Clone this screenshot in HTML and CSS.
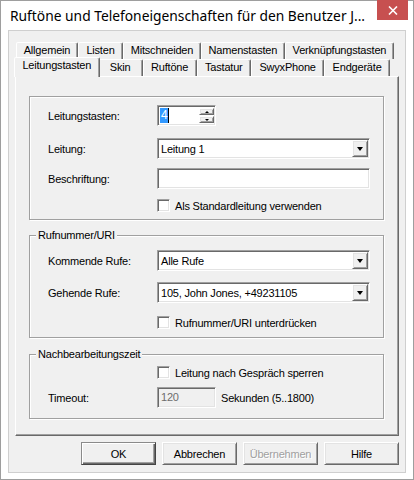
FILE: index.html
```html
<!DOCTYPE html>
<html>
  <head>
    <meta charset="utf-8">
    <title>Ruftöne und Telefoneigenschaften</title>
    <link rel="stylesheet" href="styles.css">
  </head>
  <body>
    <div class="window">
      <div class="titlebar">
        <span class="title">Ruftöne und Telefoneigenschaften für den Benutzer J...</span>
        <span class="close">
          <svg width="10" height="9" viewBox="0 0 10 9"><path d="M1 0.5 L9 8.5 M9 0.5 L1 8.5" stroke="#fff" stroke-width="1.6" fill="none"/></svg>
        </span>
      </div>

      <div class="client">
        <div class="tabs">
          <div class="tabrow back">
            <span class="tab">Allgemein</span>
            <span class="tab">Listen</span>
            <span class="tab">Mitschneiden</span>
            <span class="tab">Namenstasten</span>
            <span class="tab">Verknüpfungstasten</span>
          </div>
          <div class="tabrow front">
            <span class="tab active">Leitungstasten</span>
            <span class="tab">Skin</span>
            <span class="tab">Ruftöne</span>
            <span class="tab">Tastatur</span>
            <span class="tab">SwyxPhone</span>
            <span class="tab">Endgeräte</span>
          </div>
        </div>

        <div class="panel">
          <!-- line key settings -->
          <fieldset class="group keys">
            <div class="row">
              <span class="lbl">Leitungstasten:</span>
              <div class="spin sunken">
                <span class="val"><span class="sel">4</span><span class="caret"></span></span>
                <span class="spinbtns">
                  <span class="spinbtn raised"><i class="arr-up"></i></span>
                  <span class="spinbtn raised"><i class="arr-down"></i></span>
                </span>
              </div>
            </div>
            <div class="row mt12">
              <span class="lbl">Leitung:</span>
              <div class="combo sunken">
                <span class="text">Leitung 1</span>
                <span class="drop raised"><i class="arr-drop"></i></span>
              </div>
            </div>
            <div class="row mt9">
              <span class="lbl">Beschriftung:</span>
              <div class="edit sunken"></div>
            </div>
            <div class="check mt10">
              <span class="box sunken"></span>
              <span>Als Standardleitung verwenden</span>
            </div>
          </fieldset>

          <fieldset class="group calls">
            <legend>Rufnummer/URI</legend>
            <div class="row">
              <span class="lbl">Kommende Rufe:</span>
              <div class="combo sunken">
                <span class="text">Alle Rufe</span>
                <span class="drop raised"><i class="arr-drop"></i></span>
              </div>
            </div>
            <div class="row mt11">
              <span class="lbl">Gehende Rufe:</span>
              <div class="combo sunken">
                <span class="text">105, John Jones, +49231105</span>
                <span class="drop raised"><i class="arr-drop"></i></span>
              </div>
            </div>
            <div class="check mt13">
              <span class="box sunken"></span>
              <span>Rufnummer/URI unterdrücken</span>
            </div>
          </fieldset>

          <fieldset class="group wrapup">
            <legend>Nachbearbeitungszeit</legend>
            <div class="check">
              <span class="box sunken"></span>
              <span>Leitung nach Gespräch sperren</span>
            </div>
            <div class="row mt8">
              <span class="lbl">Timeout:</span>
              <div class="edit short disabled sunken">120</div>
              <span class="unit">Sekunden (5..1800)</span>
            </div>
          </fieldset>
        </div>

        <div class="buttons">
          <span class="btn default raised">OK</span>
          <span class="btn raised">Abbrechen</span>
          <span class="btn off raised">Übernehmen</span>
          <span class="btn raised">Hilfe</span>
        </div>
      </div>
    </div>
  </body>
</html>
```

FILE: styles.css
```css
* { box-sizing: border-box; }

body {
    margin: 0;
    font-family: "Liberation Sans", Arial, sans-serif;
    font-size: 11px;
    letter-spacing: -0.2px;
    color: #000;
}

/* window frame */
.window {
    width: 414px;
    height: 480px;
    border: 1px solid #9e9e9e;
    background: #fff;
    display: flex;
    flex-direction: column;
}

.titlebar {
    height: 29px;
    display: flex;
    align-items: center;
    padding-left: 9px;
}

.title {
    flex: 1;
    font-family: "Noto Sans", sans-serif;
    font-size: 13.8px;
    letter-spacing: 0;
    white-space: nowrap;
}

.close {
    align-self: flex-start;
    margin: -1px 5px 0 0;
    width: 31px;
    height: 20px;
    background: #c75050;
    display: flex;
    align-items: center;
    justify-content: center;
}

.client {
    margin: 0 7px;
    height: 443px;
    border: 1px solid #cfcfcf;
    background: #f0f0f0;
    padding: 11px 6px 0;
    display: flex;
    flex-direction: column;
}

/* 3d edges */
.sunken {
    border: 1px solid;
    border-color: #a0a0a0 #fff #fff #a0a0a0;
    box-shadow: inset 1px 1px 0 #696969, inset -1px -1px 0 #e3e3e3;
}

.raised {
    border: 1px solid;
    border-color: #fff #696969 #696969 #fff;
    box-shadow: inset 1px 1px 0 #e3e3e3, inset -1px -1px 0 #a0a0a0;
    background: #f0f0f0;
}

/* tab strip, two rows */
.tabs {
    display: flex;
    flex-direction: column;
}

.tabrow {
    display: flex;
    height: 17px;
}

.tabrow.back { margin: 0 5px 0 1px; }
.tabrow.front { margin: 0 9px 0 1px; }

.tab {
    flex: 1 1 auto;
    min-width: 45px;
    height: 17px;
    padding: 0 6px;
    line-height: 15px;
    text-align: center;
    white-space: nowrap;
    background: #f0f0f0;
    border: 1px solid;
    border-bottom: 0;
    border-color: #fff #696969 transparent #fff;
    border-radius: 2px 2px 0 0;
    box-shadow: inset -1px 0 0 #a0a0a0;
}

.tab.active {
    position: relative;
    z-index: 1;
    height: 20px;
    margin: -2px -2px -1px;
}

.panel {
    height: 360px;
    border: 1px solid;
    border-color: #fff #696969 #696969 #fff;
    box-shadow: inset -1px -1px 0 #a0a0a0;
    padding: 19px 14px 0 13px;
}

/* group boxes */
.group {
    margin: 0;
    border: 1px solid #a0a0a0;
    box-shadow: 1px 1px 0 #fff, inset 1px 1px 0 #fff;
    padding: 8px 13px 7px 18px;
}

.group legend {
    padding: 0 2px;
    margin-left: -12px;
    line-height: 13px;
    background: #f0f0f0;
}

.group.calls { margin-top: 9px; padding-bottom: 8px; }
.group.wrapup { margin-top: 10px; padding-top: 5px; padding-bottom: 10px; }

.row {
    display: flex;
    align-items: center;
}

.mt8 { margin-top: 8px; }
.mt9 { margin-top: 9px; }
.mt10 { margin-top: 10px; }
.mt11 { margin-top: 11px; }
.mt12 { margin-top: 12px; }
.mt13 { margin-top: 13px; }

.lbl {
    width: 109px;
    flex: none;
}

/* inputs */
.edit {
    width: 213px;
    height: 21px;
    background: #fff;
    padding: 0 3px;
    line-height: 19px;
}

.edit.short { width: 59px; }

.edit.disabled {
    background: #f0f0f0;
    color: #6d6d6d;
}

.unit { margin-left: 5px; }

.combo {
    width: 213px;
    height: 21px;
    padding: 1px;
    display: flex;
    align-items: center;
    background: #fff;
}

.combo .text {
    flex: 1;
    padding-left: 2px;
    white-space: nowrap;
}

.drop {
    width: 16px;
    height: 17px;
    display: flex;
    align-items: center;
    justify-content: center;
}

.arr-drop {
    width: 1px;
    border-left: 3px solid transparent;
    border-right: 3px solid transparent;
    border-top: 4px solid #000;
}

.spin {
    width: 59px;
    height: 21px;
    padding: 1px;
    display: flex;
    background: #fff;
}

.spin .val {
    flex: 1;
    display: flex;
    align-items: center;
    padding-left: 1px;
}

.sel {
    background: #3399ff;
    color: #fff;
    font-size: 12px;
    line-height: 15px;
    padding: 0 1px;
}

.caret {
    width: 1px;
    height: 15px;
    background: #000;
}

.spinbtns {
    width: 15px;
    padding: 1px 0;
    display: flex;
    flex-direction: column;
    gap: 1px;
}

.spinbtn {
    flex: 1;
    display: flex;
    align-items: center;
    justify-content: center;
}

.arr-up {
    width: 1px;
    border-left: 2px solid transparent;
    border-right: 2px solid transparent;
    border-bottom: 2px solid #000;
}

.arr-down {
    width: 1px;
    border-left: 2px solid transparent;
    border-right: 2px solid transparent;
    border-top: 2px solid #000;
}

.check {
    display: flex;
    align-items: center;
    gap: 5px;
    padding-left: 109px;
    height: 13px;
}

.box {
    width: 13px;
    height: 13px;
    background: #fff;
}

/* dialog buttons */
.buttons {
    display: flex;
    justify-content: flex-end;
    gap: 6px;
    margin-top: 6px;
}

.btn {
    width: 75px;
    height: 23px;
    display: flex;
    align-items: center;
    justify-content: center;
}

.btn.default {
    border-color: #8a8a8a #444 #444 #8a8a8a;
    box-shadow: inset 1px 1px 0 #fff, inset -1px -1px 0 #696969, inset -2px -2px 0 #a0a0a0;
}

.btn.off {
    color: #a0a0a0;
    text-shadow: 1px 1px 0 #fff;
}
```
